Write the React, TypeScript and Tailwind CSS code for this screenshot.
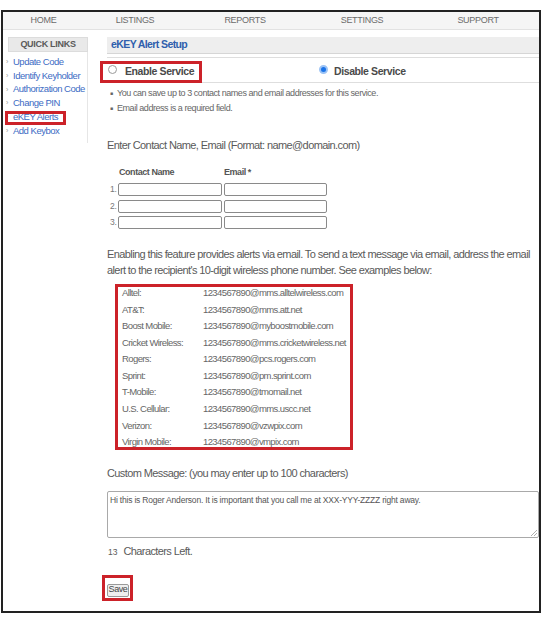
import React from "react";

const FONT = { fontFamily: '"Liberation Sans", Arial, sans-serif' };

const carriers: [string, string][] = [
  ["Alltel:", "1234567890@mms.alltelwireless.com"],
  ["AT&T:", "1234567890@mms.att.net"],
  ["Boost Mobile:", "1234567890@myboostmobile.com"],
  ["Cricket Wireless:", "1234567890@mms.cricketwireless.net"],
  ["Rogers:", "1234567890@pcs.rogers.com"],
  ["Sprint:", "1234567890@pm.sprint.com"],
  ["T-Mobile:", "1234567890@tmomail.net"],
  ["U.S. Cellular:", "1234567890@mms.uscc.net"],
  ["Verizon:", "1234567890@vzwpix.com"],
  ["Virgin Mobile:", "1234567890@vmpix.com"],
];

const links = ["Update Code", "Identify Keyholder", "Authorization Code", "Change PIN", "eKEY Alerts", "Add Keybox"];

export default function App() {
  return (
    <div className="w-[550px] h-[630px] bg-white" style={FONT}>
      <div className="ml-[1px] pt-[10px]">
        <div className="w-[540px] h-[603px] border-2 border-[#222] bg-white overflow-hidden">
          {/* Nav */}
          <div className="flex h-[18px] items-center bg-[#f5f5f5] border-b border-[#e2e2e2] text-[9px] tracking-[-0.3px] text-[#6b6b6b] uppercase">
            <div className="w-[81px] shrink-0 text-center">Home</div>
            <div className="w-[102px] shrink-0 text-center">Listings</div>
            <div className="w-[118px] shrink-0 text-center">Reports</div>
            <div className="w-[116px] shrink-0 text-center">Settings</div>
            <div className="w-[116px] shrink-0 text-center">Support</div>
          </div>

          <div className="flex mt-[7px]">
            {/* Sidebar */}
            <div className="w-[86px] shrink-0">
              <div className="ml-[5px] w-[80px] h-[15px] bg-[#e9e9e9] border border-[#dcdcdc] flex items-center justify-center text-[9px] tracking-[-0.3px] font-bold text-[#5a5a5a]">
                QUICK LINKS
              </div>
              <div className="w-[85px] border-r border-[#e6e6e6] pb-[6px] pt-[3px]">
                {links.map((l) => (
                  <div key={l} className="relative h-[13.7px] flex items-center pl-[3px]">
                    <span className="shrink-0 text-[7px] text-[#9a9a9a] w-[7px] leading-none">›</span>
                    <span className="text-[9.5px] tracking-[-0.5px] text-[#3d6bc4] leading-none whitespace-nowrap">{l}</span>
                    {l === "eKEY Alerts" && (
                      <span className="absolute left-[2px] top-[1px] w-[61px] h-[14px] border-[3px] border-[#cc2229]" />
                    )}
                  </div>
                ))}
              </div>
            </div>

            {/* Main */}
            <div className="flex-1 ml-[18px]">
              <div className="h-[17px] bg-[#eeeeee] border-b border-[#d6d6d6] flex items-center pl-[4px] text-[10.5px] tracking-[-0.6px] font-bold text-[#2f5fad]">
                eKEY Alert Setup
              </div>
              <div className="mt-[3px] h-[26px] pt-[4px] border-t border-b border-[#dedede] flex items-center">
                <div className="shrink-0 ml-[-4px] w-[96px] h-[16px] flex items-center outline-[3px] outline-solid outline-[#cc2229]">
                  <span className="shrink-0 ml-[5px] mt-[-5px] w-[9px] h-[9px] rounded-full border border-[#9a9a9a] bg-white" />
                  <span className="ml-[8px] whitespace-nowrap text-[10.5px] tracking-[-0.4px] font-bold text-[#4a4a4a]">Enable Service</span>
                </div>
                <div className="shrink-0 ml-[120px] flex items-center">
                  <span className="shrink-0 mt-[-5px] w-[9px] h-[9px] rounded-full bg-[#1a73e8] border-[2px] border-[#9cc3f5]" />
                  <span className="ml-[6px] whitespace-nowrap text-[10.5px] tracking-[-0.4px] font-bold text-[#4a4a4a]">Disable Service</span>
                </div>
              </div>
              <div className="mt-[3px] text-[9px] tracking-[-0.45px] text-[#666] leading-[15px]">
                <div className="flex items-center"><span className="shrink-0 w-[7px] ml-[3px] text-[5px]">■</span>You can save up to 3 contact names and email addresses for this service.</div>
                <div className="flex items-center"><span className="shrink-0 w-[7px] ml-[3px] text-[5px]">■</span>Email address is a required field.</div>
              </div>

              <div className="mt-[22px] text-[11px] tracking-[-0.6px] leading-[14px] text-[#5a5a5a]">
                Enter Contact Name, Email (Format: name@domain.com)
              </div>

              <div className="mt-[13px] flex text-[9px] tracking-[-0.45px] font-bold text-[#555] leading-[14px]">
                <span className="shrink-0 ml-[12px] w-[105px]">Contact Name</span>
                <span>Email *</span>
              </div>
              <div className="mt-[4px] flex flex-col gap-[3.5px]">
                {[1, 2, 3].map((n) => (
                  <div key={n} className="flex items-center h-[13px]">
                    <span className="shrink-0 w-[11px] pl-[3px] text-[8.5px] tracking-[-0.3px] text-[#777]">{n}.</span>
                    <div className="shrink-0 w-[104px] h-[13px] border border-[#8a8a8a] rounded-[2px] bg-white" />
                    <div className="shrink-0 ml-[2px] w-[103px] h-[13px] border border-[#8a8a8a] rounded-[2px] bg-white" />
                  </div>
                ))}
              </div>

              <div className="mt-[17px] text-[11px] tracking-[-0.6px] leading-[16px] text-[#5a5a5a] pr-[4px]">
                Enabling this feature provides alerts via email. To send a text message via email, address the email alert to the recipient's 10-digit wireless phone number. See examples below:
              </div>

              <div className="mt-[6px] ml-[8px] w-[238px] h-[166px] border-[3px] border-[#cc2229] pl-[4px]">
                <div className="mt-[-2px]">
                  {carriers.map(([c, e]) => (
                    <div key={c} className="flex h-[16.55px] items-center text-[9.5px] tracking-[-0.6px] text-[#666] whitespace-nowrap">
                      <span className="shrink-0 w-[81px]">{c}</span>
                      <span>{e}</span>
                    </div>
                  ))}
                </div>
              </div>

              <div className="mt-[16px] text-[11px] tracking-[-0.6px] leading-[14px] text-[#5a5a5a]">
                Custom Message: (you may enter up to 100 characters)
              </div>

              <div className="relative mt-[11px] h-[47px] border border-[#a9a9a9] rounded-[2px] px-[2px] pt-[2px] text-[8.5px] tracking-[-0.2px] text-[#555]">
                Hi this is Roger Anderson. It is important that you call me at XXX-YYY-ZZZZ right away.
                <svg className="absolute right-[1px] bottom-[1px]" width="6" height="6" viewBox="0 0 6 6">
                  <path d="M6 0 L0 6 M6 3 L3 6" stroke="#999" strokeWidth="0.8" />
                </svg>
              </div>

              <div className="mt-[5px] flex items-baseline text-[#5a5a5a] pl-[1px]">
                <span className="text-[8.5px]">13</span>
                <span className="ml-[6px] text-[11px] tracking-[-0.6px]">Characters Left.</span>
              </div>

              <div className="mt-[15px] ml-[-5px] inline-flex border-[3px] border-[#cc2229] pl-[2px] pr-[1px] pt-[6px] pb-[1px]">
                <div className="w-[22px] h-[13px] bg-[#efefef] border border-[#9a9a9a] rounded-[2px] flex items-center justify-center text-[9px] tracking-[-0.4px] text-[#444]">
                  Save
                </div>
              </div>
            </div>
          </div>
        </div>
      </div>
    </div>
  );
}
